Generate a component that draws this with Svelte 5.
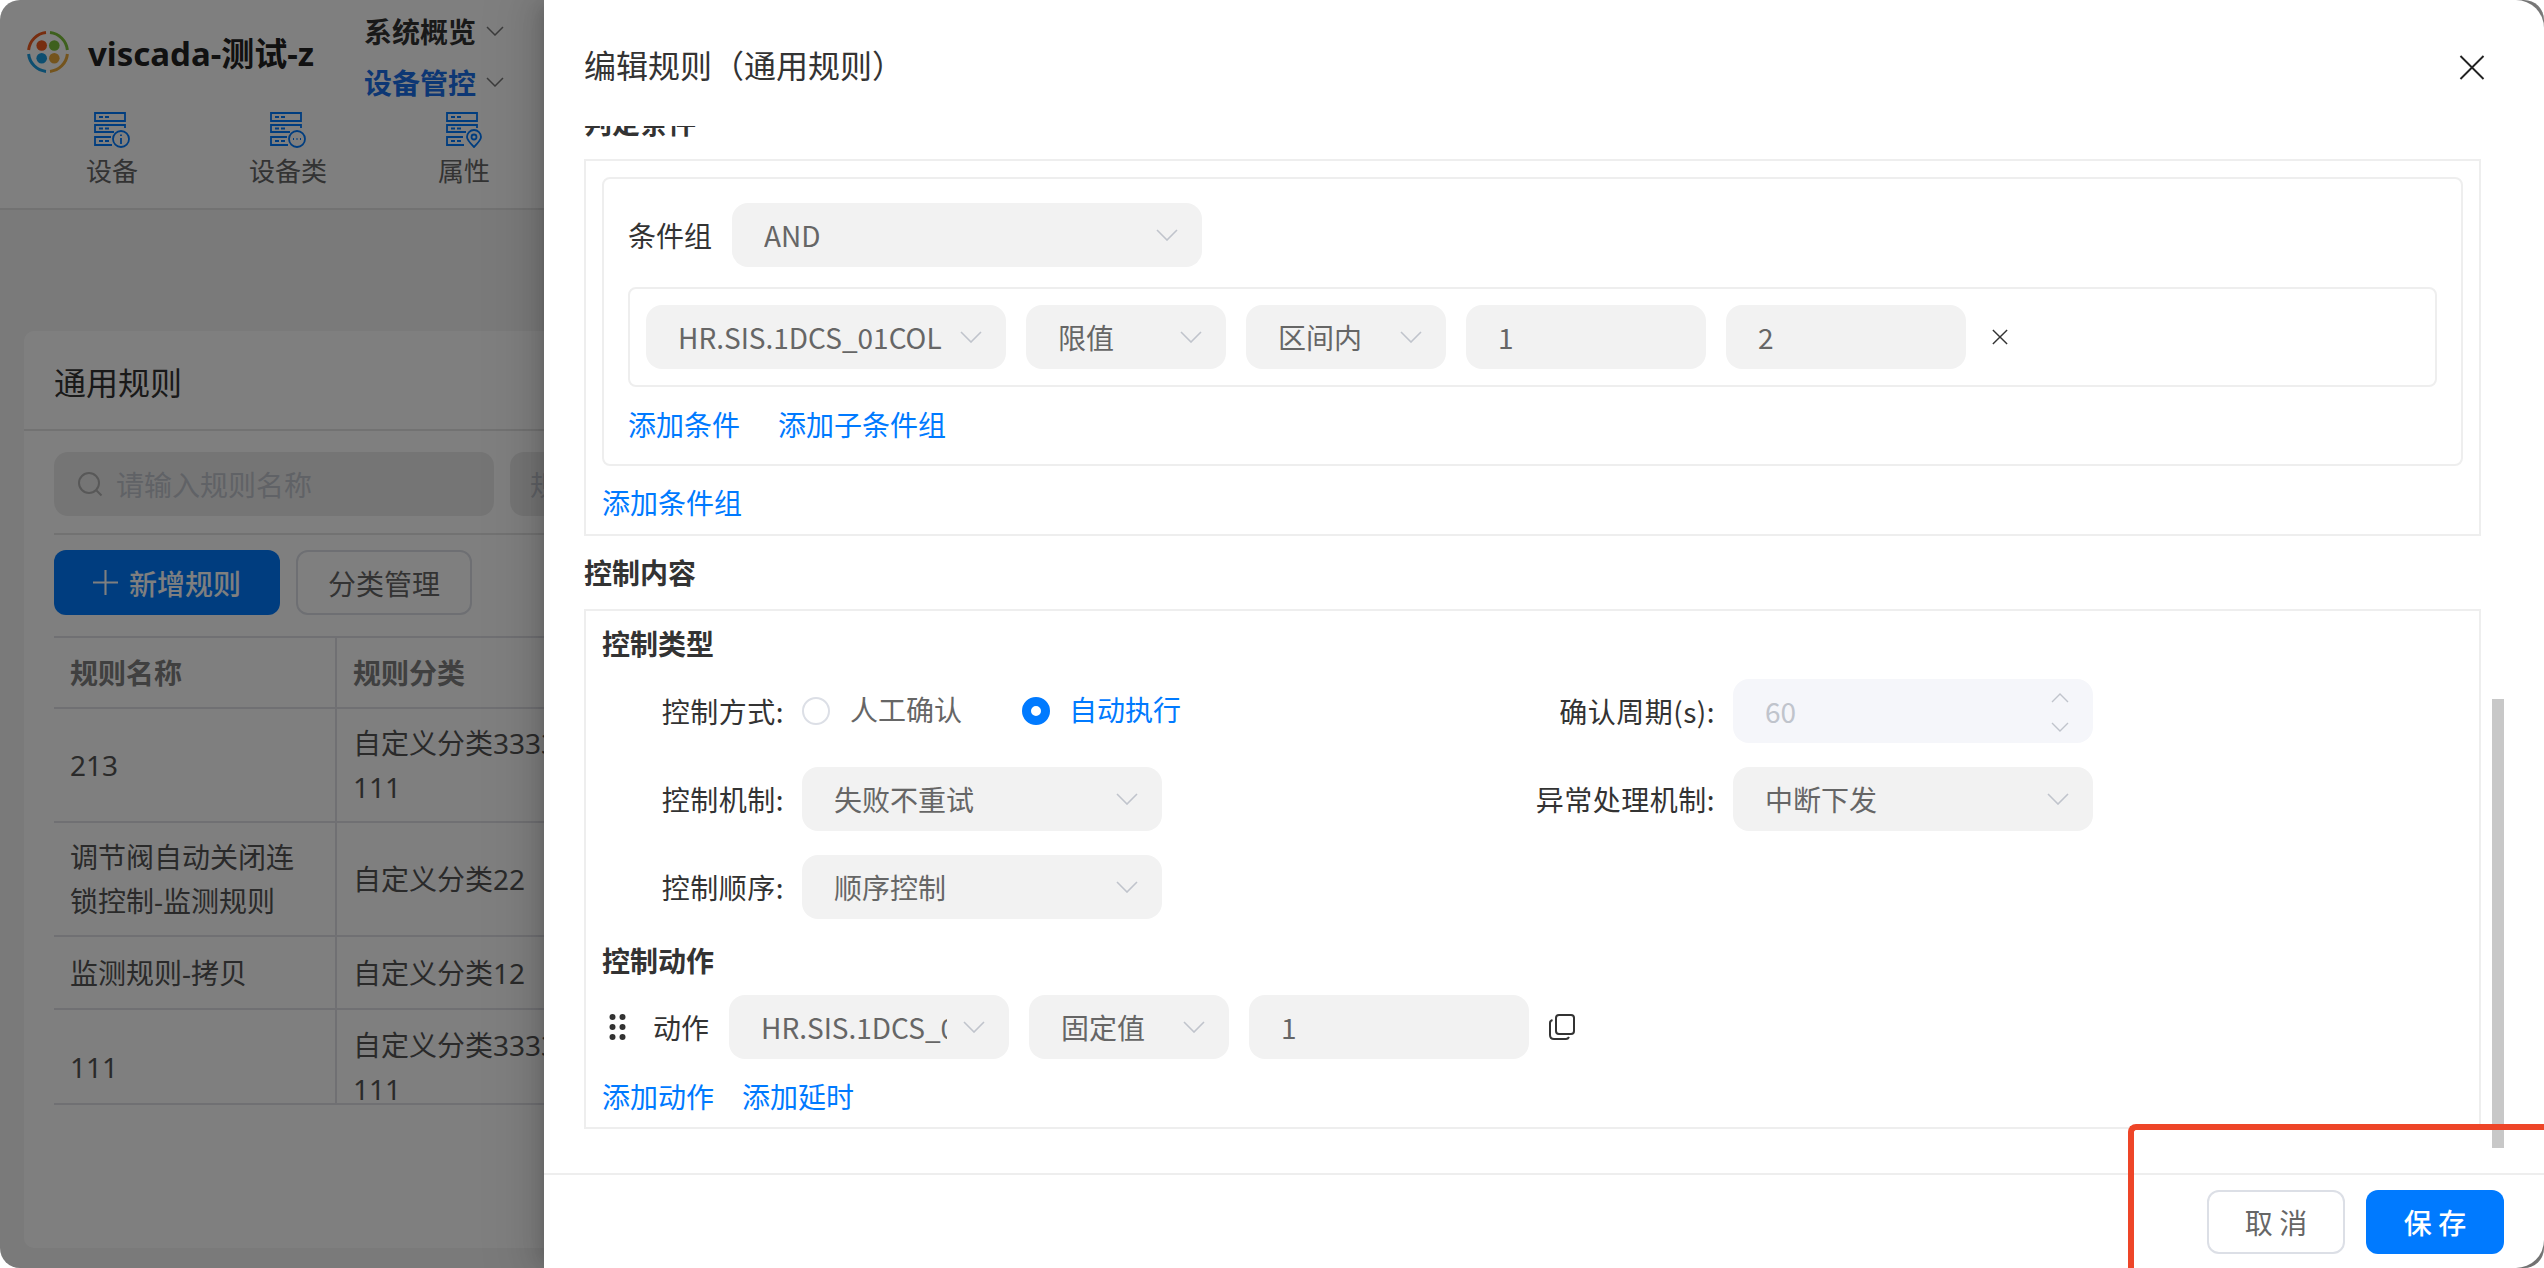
<script>
  const tabs = [
    { label: '设备', kind: 'info' },
    { label: '设备类', kind: 'more' },
    { label: '属性', kind: 'pin' }
  ];
  const rows = [
    { name: ['213'], cat: ['自定义分类3333', '111'], cls: 'tall' },
    { name: ['调节阀自动关闭连', '锁控制-监测规则'], cat: ['自定义分类22'], cls: 'tall' },
    { name: ['监测规则-拷贝'], cat: ['自定义分类12'], cls: 'short' },
    { name: ['111'], cat: ['自定义分类3333', '111'], cls: 'tall' }
  ];
</script>

{#snippet chevron()}
  <svg class="chev" viewBox="0 0 22 12" aria-hidden="true"><path d="M1 1l10 10L21 1" /></svg>
{/snippet}

{#snippet select(text, size)}
  <div class="select {size}"><span class="val">{text}</span>{@render chevron()}</div>
{/snippet}

<div class="root">
  <div class="page">
    <header class="top">
      <div class="top-row">
        <div class="brand">
          <svg class="logo" viewBox="0 0 42 42" aria-hidden="true">
            <g fill="none" stroke-width="3">
              <path d="M1.6 19A19.5 19.5 0 0 1 19 1.6" stroke="#ee5a1e" />
              <path d="M23 1.6A19.5 19.5 0 0 1 40.4 19" stroke="#7cc13a" />
              <path d="M1.6 23A19.5 19.5 0 0 0 19 40.4" stroke="#1a9ce0" />
              <path d="M23 40.4A19.5 19.5 0 0 0 40.4 23" stroke="#e8a83a" />
            </g>
            <circle cx="14.7" cy="14.5" r="5.3" fill="#ee5a1e" />
            <circle cx="27.3" cy="14.5" r="5.3" fill="#7cc13a" />
            <circle cx="14.7" cy="27.3" r="5.3" fill="#1a9ce0" />
            <circle cx="27.3" cy="27.3" r="5.3" fill="#e8a83a" />
          </svg>
          <span class="app-name">viscada-测试-z</span>
        </div>
        <nav class="menu">
          <div class="menu-item">系统概览 <svg viewBox="0 0 18 10" aria-hidden="true"><path d="M1 1l8 8 8-8" /></svg></div>
          <div class="menu-item on">设备管控 <svg viewBox="0 0 18 10" aria-hidden="true"><path d="M1 1l8 8 8-8" /></svg></div>
        </nav>
      </div>
      <div class="tabs">
        {#each tabs as tab}
          <div class="tab">
            <svg class="tab-icon" viewBox="0 0 37 36" aria-hidden="true">
              <path d="M1 1h30v8H1zM20 20H1v-7h30v3M18 33H1v-8h16M5 5h4M11 5h4M5 16.5h4M11 16.5h4M5 29h4M11 29h4" />
              {#if tab.kind === 'info'}
                <circle cx="27" cy="27" r="8" />
                <path d="M27 26v6M27 22.500v1.500" />
              {:else if tab.kind === 'more'}
                <circle cx="27" cy="27" r="8" />
                <path d="M23 27h1M26.500 27h1M30 27h1" />
              {:else}
                <path d="M28 35c-4-4-7-7-7-10a7 7 0 0 1 14 0c0 3-3 6-7 10z" />
                <circle cx="28" cy="25" r="2.500" />
              {/if}
            </svg>
            <span>{tab.label}</span>
          </div>
        {/each}
      </div>
    </header>

    <section class="card">
      <h2 class="card-title">通用规则</h2>
      <div class="card-body">
        <div class="filters">
          <div class="search">
            <svg viewBox="0 0 26 26" aria-hidden="true"><circle cx="12" cy="12" r="10" /><path d="M19.500 19.500l5 5" /></svg>
            <span>请输入规则名称</span>
          </div>
          <div class="search second"><span>规则分类</span></div>
        </div>
        <div class="actions">
          <div class="btn-new">
            <svg viewBox="0 0 24 24" aria-hidden="true"><path d="M12 0v24M0 12h24" /></svg>
            新增规则
          </div>
          <div class="btn-cat">分类管理</div>
        </div>
        <div class="table-wrap">
          <table>
            <thead><tr><th>规则名称</th><th>规则分类</th></tr></thead>
            <tbody>
              {#each rows as row}
                <tr class={row.cls}>
                  <td>{#each row.name as line}<div>{line}</div>{/each}</td>
                  <td>{#each row.cat as line}<div>{line}</div>{/each}</td>
                </tr>
              {/each}
            </tbody>
          </table>
        </div>
      </div>
    </section>
  </div>

  <div class="mask"></div>

  <aside class="drawer">
    <div class="d-head">
      <span>编辑规则（通用规则）</span>
      <svg class="close" viewBox="0 0 26 26" aria-hidden="true"><path d="M1 1l24 24M25 1L1 25" /></svg>
    </div>

    <div class="d-body">
      <h3 class="clipped">判定条件</h3>
      <div class="box first">
        <div class="group">
          <div class="group-head">
            <span class="lb">条件组</span>
            {@render select('AND', 'w470')}
          </div>
          <div class="cond">
            {@render select('HR.SIS.1DCS_01COL', 'w360')}
            {@render select('限值', 'w200')}
            {@render select('区间内', 'w200')}
            <div class="input w240">1</div>
            <div class="input w240">2</div>
            <svg class="del" viewBox="0 0 18 18" aria-hidden="true"><path d="M1 1l16 16M17 1L1 17" /></svg>
          </div>
          <div class="links in-group"><span>添加条件</span><span>添加子条件组</span></div>
        </div>
        <div class="links under-group"><span>添加条件组</span></div>
      </div>

      <h3 class="sec">控制内容</h3>
      <div class="box ctrl">
        <h4>控制类型</h4>
        <div class="form">
          <div class="item">
            <span class="lbl">控制方式:</span>
            <div class="radios">
              <span class="radio"></span><span class="r-text">人工确认</span>
              <span class="radio checked"></span><span class="r-text active">自动执行</span>
            </div>
          </div>
          <div class="item">
            <span class="lbl">确认周期(s):</span>
            <div class="input w360 disabled">
              60
              <div class="spin">
                <svg viewBox="0 0 18 10" aria-hidden="true"><path d="M1 9l8-8 8 8" /></svg>
                <svg viewBox="0 0 18 10" aria-hidden="true"><path d="M1 1l8 8 8-8" /></svg>
              </div>
            </div>
          </div>
          <div class="item">
            <span class="lbl">控制机制:</span>
            {@render select('失败不重试', 'w360')}
          </div>
          <div class="item">
            <span class="lbl">异常处理机制:</span>
            {@render select('中断下发', 'w360')}
          </div>
          <div class="item">
            <span class="lbl">控制顺序:</span>
            {@render select('顺序控制', 'w360')}
          </div>
        </div>
        <h4 class="act-title">控制动作</h4>
        <div class="act">
          <svg class="drag" viewBox="0 0 18 28" aria-hidden="true">
            <circle cx="3.500" cy="4" r="3" /><circle cx="13.500" cy="4" r="3" />
            <circle cx="3.500" cy="14" r="3" /><circle cx="13.500" cy="14" r="3" />
            <circle cx="3.500" cy="24" r="3" /><circle cx="13.500" cy="24" r="3" />
          </svg>
          <span class="act-lb">动作</span>
          {@render select('HR.SIS.1DCS_01COL', 'w280')}
          {@render select('固定值', 'w200')}
          <div class="input w280">1</div>
          <svg class="copy" viewBox="0 0 26 26" aria-hidden="true">
            <rect x="7" y="1" width="18" height="19" rx="3" />
            <path d="M3.500 6C2 6.500 1 7.500 1 9v12c0 2.500 1.500 4 4 4h12c1.500 0 2.500-1 3-2" />
          </svg>
        </div>
        <div class="links under-act"><span>添加动作</span><span>添加延时</span></div>
      </div>
    </div>

    <div class="scrollbar"></div>

    <div class="d-foot">
      <div class="btn cancel">取 消</div>
      <div class="btn save">保 存</div>
    </div>
  </aside>

  <div class="mark"></div>
</div>

<style>
  :global(body) {
    margin: 0;
    background: #fff;
  }

  .root {
    position: relative;
    width: 2544px;
    height: 1268px;
    overflow: hidden;
    border-radius: 20px;
    font-family: "Noto Sans CJK SC", sans-serif;
    color: #333;
  }

  /* page behind the drawer */
  .page {
    height: 100%;
    background: #f4f4f4;
    font-family: "Noto Sans", "Noto Sans CJK SC", sans-serif;
  }
  .top {
    height: 208px;
    background: #fff;
    border-bottom: 2px solid #e4e4e4;
  }
  .top-row {
    display: flex;
    height: 107px;
  }
  .brand {
    display: flex;
    align-items: center;
    width: 364px;
    height: 104px;
    padding-left: 27px;
    box-sizing: border-box;
  }
  .logo {
    width: 42px;
    height: 42px;
    margin-right: 19px;
  }
  .app-name {
    font-size: 33px;
    font-weight: 700;
    color: #222;
    white-space: nowrap;
  }
  .menu {
    padding-top: 5px;
  }
  .menu-item {
    display: flex;
    align-items: center;
    gap: 10px;
    height: 51px;
    font-size: 28px;
    font-weight: 700;
    color: #333;
  }
  .menu-item.on {
    color: #1a6fe8;
  }
  .menu-item svg {
    width: 18px;
    height: 10px;
    fill: none;
    stroke: #777;
    stroke-width: 1.500;
  }
  .tabs {
    display: flex;
    padding: 5px 0 0 24px;
  }
  .tab {
    display: flex;
    flex-direction: column;
    align-items: center;
    width: 176px;
    font-size: 26px;
    line-height: 36px;
    color: #666;
  }
  .tab-icon {
    width: 37px;
    height: 36px;
    margin-bottom: 5px;
    fill: none;
    stroke: #007aff;
    stroke-width: 1.800;
  }

  .card {
    height: 917px;
    margin: 121px 0 0 24px;
    background: #fff;
    border-radius: 10px;
  }
  .card-title {
    height: 92px;
    margin: 0;
    padding: 6px 0 0 30px;
    font-size: 32px;
    font-weight: 400;
    line-height: 88px;
    color: #333;
    border-bottom: 2px solid #e4e4e4;
    font-family: "Noto Sans CJK SC", sans-serif;
  }
  .card-body {
    padding: 21px 0 0 30px;
  }
  .filters {
    display: flex;
    gap: 16px;
    padding-bottom: 17px;
    border-bottom: 2px solid #e4e4e4;
  }
  .search {
    display: flex;
    align-items: center;
    gap: 13px;
    width: 440px;
    height: 64px;
    padding-left: 23px;
    box-sizing: border-box;
    border-radius: 14px;
    background: #ebebeb;
    font-size: 28px;
    color: #c0c4cc;
  }
  .search svg {
    width: 26px;
    height: 26px;
    fill: none;
    stroke: #b0b0b0;
    stroke-width: 2;
  }
  .search.second {
    padding-left: 20px;
  }
  .actions {
    display: flex;
    gap: 16px;
    margin-top: 15px;
  }
  .btn-new,
  .btn-cat {
    display: flex;
    align-items: center;
    justify-content: center;
    height: 65px;
    box-sizing: border-box;
    border-radius: 12px;
    font-size: 28px;
  }
  .btn-new {
    gap: 11px;
    width: 226px;
    background: #007aff;
    color: #fff;
    font-weight: 500;
  }
  .btn-new svg {
    width: 25px;
    height: 25px;
    fill: none;
    stroke: #fff;
    stroke-width: 2;
  }
  .btn-cat {
    width: 176px;
    border: 2px solid #dcdfe6;
    color: #666;
  }
  .table-wrap {
    height: 465px;
    margin-top: 21px;
    overflow: hidden;
    border-top: 2px solid #e0e1e6;
    border-bottom: 2px solid #e0e1e6;
  }
  table {
    width: 2400px;
    border-collapse: collapse;
    table-layout: fixed;
    font-size: 28px;
    line-height: 44px;
  }
  th,
  td {
    box-sizing: border-box;
  }
  th:first-child,
  td:first-child {
    width: 282px;
    border-right: 2px solid #e0e1e6;
  }
  th {
    height: 70px;
    padding: 0 0 0 16px;
    text-align: left;
    font-weight: 700;
    color: #808080;
    white-space: nowrap;
  }
  td {
    padding: 0 0 0 16px;
    color: #555;
    white-space: nowrap;
    border-top: 2px solid #e0e1e6;
  }
  tr.tall td {
    height: 114px;
  }
  tr.short td {
    height: 73px;
  }

  .mask {
    position: absolute;
    inset: 0;
    background: rgba(0, 0, 0, 0.5);
  }

  /* drawer */
  .drawer {
    position: absolute;
    top: 0;
    right: 0;
    bottom: 0;
    left: 544px;
    display: flex;
    flex-direction: column;
    background: #fff;
    border-radius: 0 28px 28px 0;
    box-shadow: -6px 0 16px -8px rgba(0, 0, 0, 0.16), -9px 0 28px 0 rgba(0, 0, 0, 0.1), -12px 0 48px 16px rgba(0, 0, 0, 0.06);
  }
  .d-head {
    display: flex;
    align-items: center;
    justify-content: space-between;
    flex: none;
    height: 134px;
    margin-bottom: -8px;
    padding: 0 59px 0 40px;
    box-sizing: border-box;
    font-size: 32px;
    color: #333;
  }
  .d-head span {
    margin-bottom: 6px;
  }
  .close {
    width: 26px;
    height: 25px;
    fill: none;
    stroke: #222;
    stroke-width: 2;
  }
  .d-body {
    position: relative;
    flex: none;
    height: 1047px;
    overflow: hidden;
    padding-left: 40px;
    width: 1897px;
  }
  h3,
  h4 {
    margin: 0;
    font-size: 28px;
    font-weight: 700;
    line-height: 40px;
    color: #333;
  }
  .clipped {
    margin: -24px 0 17px;
  }
  .sec {
    margin: 16px 0 17px;
  }
  .box {
    padding: 16px 16px 11px;
    border: 2px solid #eee;
  }
  .box.first {
    padding-bottom: 12px;
  }
  .group {
    padding: 24px 24px 20px;
    border: 2px solid #eee;
    border-radius: 8px;
  }
  .group-head {
    display: flex;
    align-items: center;
    gap: 20px;
  }
  .lb {
    font-size: 28px;
  }
  .cond {
    display: flex;
    align-items: center;
    gap: 20px;
    height: 64px;
    margin-top: 20px;
    padding: 16px;
    border: 2px solid #eee;
    border-radius: 8px;
  }
  .select,
  .input {
    display: flex;
    align-items: center;
    flex: none;
    height: 64px;
    padding: 0 24px 0 32px;
    box-sizing: border-box;
    border-radius: 16px;
    background: #f2f2f2;
    font-size: 28px;
    color: #666;
  }
  .val {
    flex: 1;
    min-width: 0;
    margin-right: 16px;
    overflow: hidden;
    white-space: nowrap;
  }
  .chev {
    flex: none;
    width: 22px;
    height: 12px;
    fill: none;
    stroke: #c0c4cc;
    stroke-width: 1.600;
  }
  .w200 { width: 200px; }
  .w240 { width: 240px; }
  .w280 { width: 280px; }
  .w360 { width: 360px; }
  .w470 { width: 470px; }
  .del {
    width: 18px;
    height: 16px;
    margin-left: 5px;
    fill: none;
    stroke: #333;
    stroke-width: 1.600;
  }
  .links {
    display: flex;
    gap: 38px;
    font-size: 28px;
    line-height: 40px;
    color: #007aff;
  }
  .in-group {
    margin-top: 17px;
  }
  .under-group {
    margin-top: 16px;
  }
  .ctrl {
    padding-top: 12px;
  }
  .form {
    display: grid;
    grid-template-columns: 931px 1fr;
    row-gap: 24px;
    margin-top: 16px;
  }
  .item {
    display: flex;
    align-items: center;
    gap: 18px;
    height: 64px;
    font-size: 28px;
  }
  .lbl {
    width: 182px;
    text-align: right;
    white-space: nowrap;
    letter-spacing: 0.5px;
  }
  .radios {
    display: flex;
    align-items: center;
    color: #666;
  }
  .radio {
    flex: none;
    width: 28px;
    height: 28px;
    box-sizing: border-box;
    border: 2px solid #dcdfe6;
    border-radius: 50%;
    background: #fff;
  }
  .radio.checked {
    border: 9px solid #007aff;
    margin-left: 60px;
  }
  .r-text {
    margin-left: 20px;
    margin-top: -4px;
  }
  .r-text.active {
    margin-left: 19px;
    color: #007aff;
  }
  .disabled {
    position: relative;
    background: #f5f6fa;
    color: #c0c4cc;
  }
  .spin {
    position: absolute;
    top: 14px;
    right: 24px;
    display: flex;
    flex-direction: column;
    gap: 19px;
  }
  .spin svg {
    display: block;
    width: 18px;
    height: 10px;
    fill: none;
    stroke: #c0c4cc;
    stroke-width: 1.400;
  }
  .act-title {
    margin-top: 21px;
  }
  .act {
    display: flex;
    align-items: center;
    gap: 20px;
    margin-top: 15px;
    font-size: 28px;
  }
  .drag {
    width: 18px;
    height: 28px;
    margin: 0 6px 0 7px;
    fill: #333;
  }
  .act-lb {
    width: 56px;
  }
  .copy {
    width: 26px;
    height: 26px;
    fill: none;
    stroke: #333;
    stroke-width: 2;
  }
  .under-act {
    gap: 28px;
    margin-top: 17px;
  }
  .scrollbar {
    position: absolute;
    top: 699px;
    right: 40px;
    width: 12px;
    height: 449px;
    background: #c8c8c8;
  }
  .d-foot {
    display: flex;
    flex: none;
    justify-content: flex-end;
    gap: 21px;
    height: 93px;
    padding: 15px 40px 0 0;
    box-sizing: border-box;
    border-top: 2px solid #eee;
  }
  .btn {
    display: flex;
    align-items: center;
    justify-content: center;
    width: 138px;
    height: 64px;
    box-sizing: border-box;
    border-radius: 12px;
    font-size: 28px;
  }
  .cancel {
    border: 2px solid #dcdfe6;
    color: #666;
  }
  .save {
    background: #007aff;
    color: #fff;
    font-weight: 500;
  }
  .mark {
    position: absolute;
    top: 1124px;
    right: 0;
    bottom: 0;
    left: 2128px;
    border-top: 6px solid #ee4528;
    border-left: 6px solid #ee4528;
    border-top-left-radius: 8px;
  }
</style>
